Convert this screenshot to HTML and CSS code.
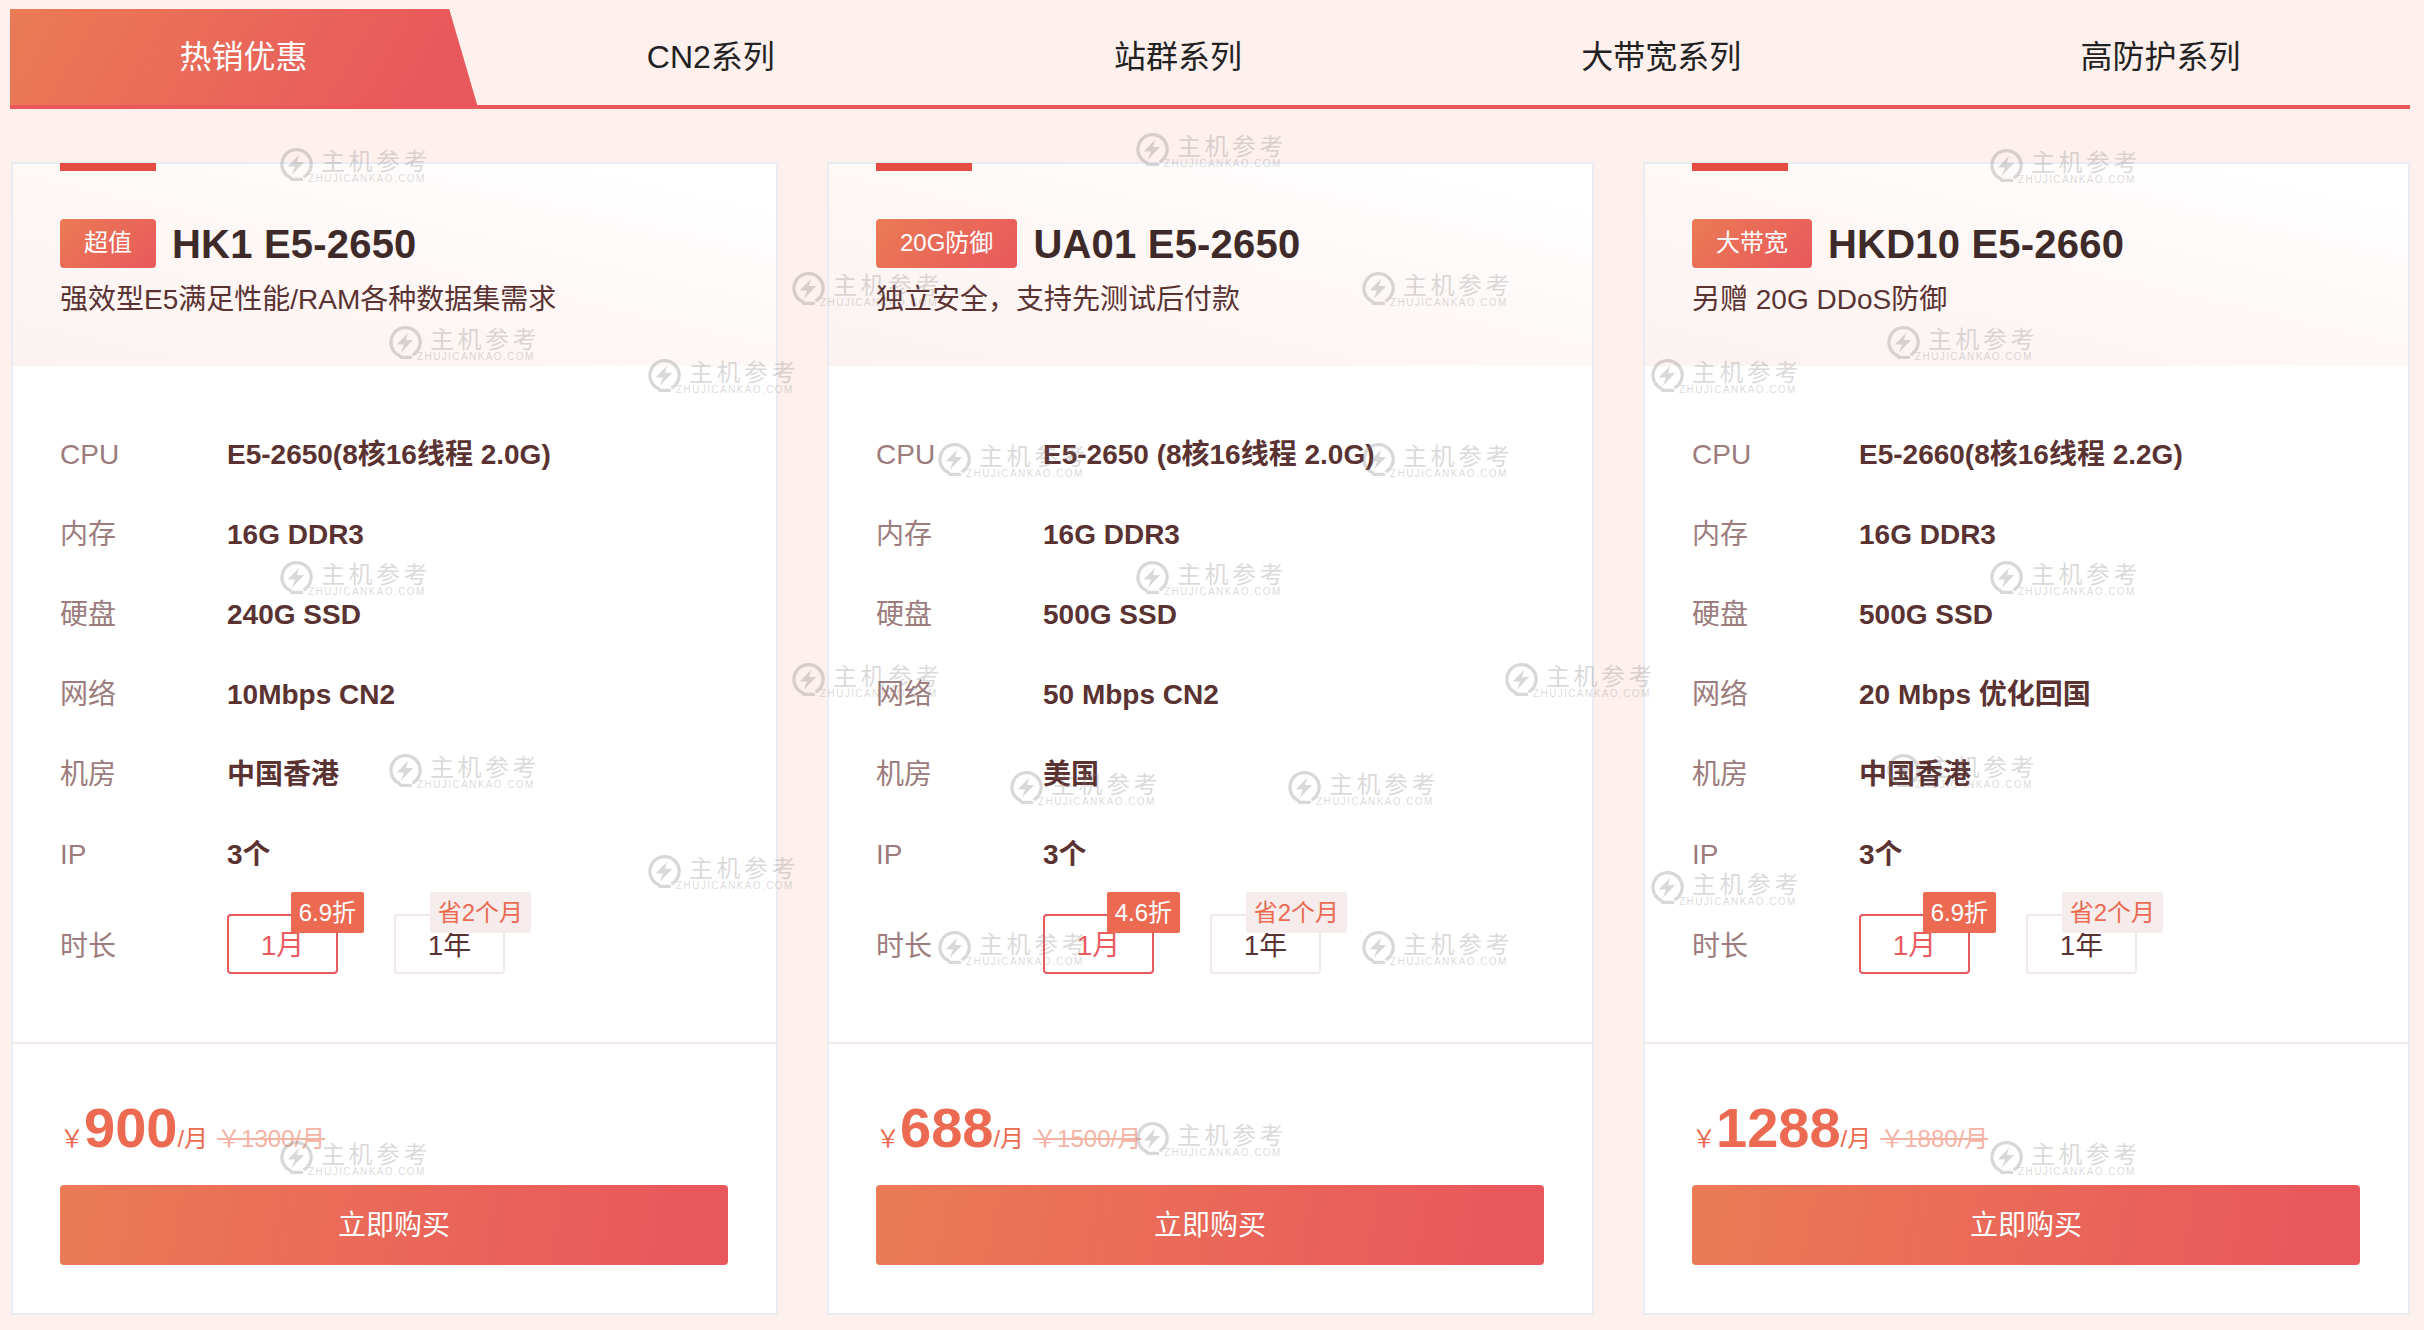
FILE: index.html
```html
<!DOCTYPE html>
<html lang="zh-CN">
<head>
<meta charset="utf-8">
<title>热销优惠</title>
<link rel="stylesheet" href="styles.css">
</head>
<body>
<svg class="defs" width="0" height="0" aria-hidden="true"><defs>
  <g id="wm-logo">
    <path d="M24 28.5A14.2 14.2 0 1 0 10 29.6L11.5 31.5H21" fill="none" stroke="currentColor" stroke-width="3.2" stroke-linecap="round" stroke-linejoin="round"/>
    <path d="M18.5 7.5L7.5 19H14.5L11.5 27L23.5 14.5H16.5Z" fill="currentColor"/>
  </g>
</defs></svg>

<nav class="tabs">
  <a class="tab tab-active">热销优惠</a>
  <a class="tab">CN2系列</a>
  <a class="tab">站群系列</a>
  <a class="tab">大带宽系列</a>
  <a class="tab">高防护系列</a>
</nav>

<main class="cards">
  <section class="card">
    <header class="card-head">
      <div class="title-row"><span class="badge">超值</span><h2 class="title">HK1 E5-2650</h2></div>
      <p class="sub">强效型E5满足性能/RAM各种数据集需求</p>
    </header>
    <div class="specs">
      <div class="row"><span class="label">CPU</span><span class="value">E5-2650(8核16线程 2.0G)</span></div>
      <div class="row"><span class="label">内存</span><span class="value">16G DDR3</span></div>
      <div class="row"><span class="label">硬盘</span><span class="value">240G SSD</span></div>
      <div class="row"><span class="label">网络</span><span class="value">10Mbps CN2</span></div>
      <div class="row"><span class="label">机房</span><span class="value">中国香港</span></div>
      <div class="row"><span class="label">IP</span><span class="value">3个</span></div>
      <div class="row row-term"><span class="label">时长</span>
        <div class="options">
          <div class="option option-on">1月<span class="tag tag-red">6.9折</span></div>
          <div class="option">1年<span class="tag tag-pale">省2个月</span></div>
        </div>
      </div>
    </div>
    <footer class="card-foot">
      <div class="price"><span class="cur">￥</span><span class="amount">900</span><span class="unit">/月</span><span class="old">￥1300/月</span></div>
      <a class="buy">立即购买</a>
    </footer>
  </section>

  <section class="card">
    <header class="card-head">
      <div class="title-row"><span class="badge">20G防御</span><h2 class="title">UA01 E5-2650</h2></div>
      <p class="sub">独立安全，支持先测试后付款</p>
    </header>
    <div class="specs">
      <div class="row"><span class="label">CPU</span><span class="value">E5-2650 (8核16线程 2.0G)</span></div>
      <div class="row"><span class="label">内存</span><span class="value">16G DDR3</span></div>
      <div class="row"><span class="label">硬盘</span><span class="value">500G SSD</span></div>
      <div class="row"><span class="label">网络</span><span class="value">50 Mbps CN2</span></div>
      <div class="row"><span class="label">机房</span><span class="value">美国</span></div>
      <div class="row"><span class="label">IP</span><span class="value">3个</span></div>
      <div class="row row-term"><span class="label">时长</span>
        <div class="options">
          <div class="option option-on">1月<span class="tag tag-red">4.6折</span></div>
          <div class="option">1年<span class="tag tag-pale">省2个月</span></div>
        </div>
      </div>
    </div>
    <footer class="card-foot">
      <div class="price"><span class="cur">￥</span><span class="amount">688</span><span class="unit">/月</span><span class="old">￥1500/月</span></div>
      <a class="buy">立即购买</a>
    </footer>
  </section>

  <section class="card">
    <header class="card-head">
      <div class="title-row"><span class="badge">大带宽</span><h2 class="title">HKD10 E5-2660</h2></div>
      <p class="sub">另赠 20G DDoS防御</p>
    </header>
    <div class="specs">
      <div class="row"><span class="label">CPU</span><span class="value">E5-2660(8核16线程 2.2G)</span></div>
      <div class="row"><span class="label">内存</span><span class="value">16G DDR3</span></div>
      <div class="row"><span class="label">硬盘</span><span class="value">500G SSD</span></div>
      <div class="row"><span class="label">网络</span><span class="value">20 Mbps 优化回国</span></div>
      <div class="row"><span class="label">机房</span><span class="value">中国香港</span></div>
      <div class="row"><span class="label">IP</span><span class="value">3个</span></div>
      <div class="row row-term"><span class="label">时长</span>
        <div class="options">
          <div class="option option-on">1月<span class="tag tag-red">6.9折</span></div>
          <div class="option">1年<span class="tag tag-pale">省2个月</span></div>
        </div>
      </div>
    </div>
    <footer class="card-foot">
      <div class="price"><span class="cur">￥</span><span class="amount">1288</span><span class="unit">/月</span><span class="old">￥1880/月</span></div>
      <a class="buy">立即购买</a>
    </footer>
  </section>
</main>

<div class="wm-layer" aria-hidden="true">
  <div class="wm w1"><svg class="wm-icon" viewBox="0 0 32 34"><use href="#wm-logo"/></svg><div class="wm-zh">主机参考</div><div class="wm-en">ZHUJICANKAO.COM</div></div>
  <div class="wm w2"><svg class="wm-icon" viewBox="0 0 32 34"><use href="#wm-logo"/></svg><div class="wm-zh">主机参考</div><div class="wm-en">ZHUJICANKAO.COM</div></div>
  <div class="wm w3"><svg class="wm-icon" viewBox="0 0 32 34"><use href="#wm-logo"/></svg><div class="wm-zh">主机参考</div><div class="wm-en">ZHUJICANKAO.COM</div></div>
  <div class="wm w4"><svg class="wm-icon" viewBox="0 0 32 34"><use href="#wm-logo"/></svg><div class="wm-zh">主机参考</div><div class="wm-en">ZHUJICANKAO.COM</div></div>
  <div class="wm w5"><svg class="wm-icon" viewBox="0 0 32 34"><use href="#wm-logo"/></svg><div class="wm-zh">主机参考</div><div class="wm-en">ZHUJICANKAO.COM</div></div>
  <div class="wm w6"><svg class="wm-icon" viewBox="0 0 32 34"><use href="#wm-logo"/></svg><div class="wm-zh">主机参考</div><div class="wm-en">ZHUJICANKAO.COM</div></div>
  <div class="wm w7"><svg class="wm-icon" viewBox="0 0 32 34"><use href="#wm-logo"/></svg><div class="wm-zh">主机参考</div><div class="wm-en">ZHUJICANKAO.COM</div></div>
  <div class="wm w8"><svg class="wm-icon" viewBox="0 0 32 34"><use href="#wm-logo"/></svg><div class="wm-zh">主机参考</div><div class="wm-en">ZHUJICANKAO.COM</div></div>
  <div class="wm w9"><svg class="wm-icon" viewBox="0 0 32 34"><use href="#wm-logo"/></svg><div class="wm-zh">主机参考</div><div class="wm-en">ZHUJICANKAO.COM</div></div>
  <div class="wm w10"><svg class="wm-icon" viewBox="0 0 32 34"><use href="#wm-logo"/></svg><div class="wm-zh">主机参考</div><div class="wm-en">ZHUJICANKAO.COM</div></div>
  <div class="wm w11"><svg class="wm-icon" viewBox="0 0 32 34"><use href="#wm-logo"/></svg><div class="wm-zh">主机参考</div><div class="wm-en">ZHUJICANKAO.COM</div></div>
  <div class="wm w12"><svg class="wm-icon" viewBox="0 0 32 34"><use href="#wm-logo"/></svg><div class="wm-zh">主机参考</div><div class="wm-en">ZHUJICANKAO.COM</div></div>
  <div class="wm w13"><svg class="wm-icon" viewBox="0 0 32 34"><use href="#wm-logo"/></svg><div class="wm-zh">主机参考</div><div class="wm-en">ZHUJICANKAO.COM</div></div>
  <div class="wm w14"><svg class="wm-icon" viewBox="0 0 32 34"><use href="#wm-logo"/></svg><div class="wm-zh">主机参考</div><div class="wm-en">ZHUJICANKAO.COM</div></div>
  <div class="wm w15"><svg class="wm-icon" viewBox="0 0 32 34"><use href="#wm-logo"/></svg><div class="wm-zh">主机参考</div><div class="wm-en">ZHUJICANKAO.COM</div></div>
  <div class="wm w16"><svg class="wm-icon" viewBox="0 0 32 34"><use href="#wm-logo"/></svg><div class="wm-zh">主机参考</div><div class="wm-en">ZHUJICANKAO.COM</div></div>
  <div class="wm w17"><svg class="wm-icon" viewBox="0 0 32 34"><use href="#wm-logo"/></svg><div class="wm-zh">主机参考</div><div class="wm-en">ZHUJICANKAO.COM</div></div>
  <div class="wm w18"><svg class="wm-icon" viewBox="0 0 32 34"><use href="#wm-logo"/></svg><div class="wm-zh">主机参考</div><div class="wm-en">ZHUJICANKAO.COM</div></div>
  <div class="wm w19"><svg class="wm-icon" viewBox="0 0 32 34"><use href="#wm-logo"/></svg><div class="wm-zh">主机参考</div><div class="wm-en">ZHUJICANKAO.COM</div></div>
  <div class="wm w20"><svg class="wm-icon" viewBox="0 0 32 34"><use href="#wm-logo"/></svg><div class="wm-zh">主机参考</div><div class="wm-en">ZHUJICANKAO.COM</div></div>
  <div class="wm w21"><svg class="wm-icon" viewBox="0 0 32 34"><use href="#wm-logo"/></svg><div class="wm-zh">主机参考</div><div class="wm-en">ZHUJICANKAO.COM</div></div>
  <div class="wm w22"><svg class="wm-icon" viewBox="0 0 32 34"><use href="#wm-logo"/></svg><div class="wm-zh">主机参考</div><div class="wm-en">ZHUJICANKAO.COM</div></div>
  <div class="wm w23"><svg class="wm-icon" viewBox="0 0 32 34"><use href="#wm-logo"/></svg><div class="wm-zh">主机参考</div><div class="wm-en">ZHUJICANKAO.COM</div></div>
  <div class="wm w24"><svg class="wm-icon" viewBox="0 0 32 34"><use href="#wm-logo"/></svg><div class="wm-zh">主机参考</div><div class="wm-en">ZHUJICANKAO.COM</div></div>
  <div class="wm w25"><svg class="wm-icon" viewBox="0 0 32 34"><use href="#wm-logo"/></svg><div class="wm-zh">主机参考</div><div class="wm-en">ZHUJICANKAO.COM</div></div>
  <div class="wm w26"><svg class="wm-icon" viewBox="0 0 32 34"><use href="#wm-logo"/></svg><div class="wm-zh">主机参考</div><div class="wm-en">ZHUJICANKAO.COM</div></div>
  <div class="wm w27"><svg class="wm-icon" viewBox="0 0 32 34"><use href="#wm-logo"/></svg><div class="wm-zh">主机参考</div><div class="wm-en">ZHUJICANKAO.COM</div></div>
</div>
</body>
</html>
```

FILE: styles.css
```css
* { box-sizing: border-box; }
html, body { margin: 0; padding: 0; }
body {
  position: relative;
  height: 1330px;
  overflow: hidden;
  padding: 9px 14px 15px 10px;
  background: #fdf0ed;
  font-family: "Liberation Sans", "Noto Sans CJK SC", sans-serif;
  font-size: 28px;
  color: #5a3232;
}
.defs { position: absolute; }

/* tabs */
.tabs {
  display: flex;
  border-bottom: 4px solid #ea585c;
  height: 100px;
}
.tab {
  flex: 1 1 auto;
  padding: 0 168px;
  height: 96px;
  line-height: 96px;
  text-align: center;
  font-size: 32px;
  color: #222;
  white-space: nowrap;
}
.tab-active {
  color: #fff;
  background: linear-gradient(120deg, #ea7b55 0%, #e9585c 88%);
  clip-path: polygon(0 0, calc(100% - 28px) 0, 100% 100%, 0 100%);
}

/* cards */
.cards {
  display: grid;
  grid-template-columns: repeat(3, 767px);
  column-gap: 49px;
  margin: 53px 0 0 1px;
}
.card {
  position: relative;
  height: 1153px;
  background: #fff;
  border: 2px solid #e9edf2;
}
.card-head {
  position: relative;
  height: 202px;
  padding: 55px 47px 0;
  background: linear-gradient(193deg, #fff 12%, #fefbfa 32%, #fdf6f4 62%, #fbf3f1 100%);
}
.card-head::before {
  content: "";
  position: absolute;
  left: 47px;
  top: -1px;
  width: 96px;
  height: 8px;
  background: #e34e41;
}
.title-row { display: flex; align-items: center; gap: 16px; height: 49px; }
.badge {
  height: 49px;
  padding: 0 24px;
  line-height: 48px;
  font-size: 24px;
  color: #fff;
  border-radius: 4px;
  background: linear-gradient(135deg, #ea7b55, #e9585c);
}
.title { margin: 2px 0 0; font-size: 40px; letter-spacing: 0.2px; font-weight: 700; color: #3f2a2a; white-space: nowrap; }
.sub { margin: 12px 0 0; font-size: 28px; line-height: 40px; color: #5a3232; white-space: nowrap; }

/* specs */
.specs { padding: 47px 47px 68px; }
.row { display: flex; align-items: center; height: 80px; line-height: 40px; }
.label { flex: 0 0 167px; margin-top: 3px; color: #9c7c7c; }
.value { margin-top: 3px; font-weight: 700; color: #5a3232; white-space: nowrap; }
.row-term { height: 60px; margin-top: 21px; }
.row-term .label { margin-top: 6px; }
.options { display: flex; gap: 56px; }
.option {
  position: relative;
  width: 111px;
  height: 60px;
  line-height: 60px;
  text-align: center;
  border: 2px solid #f3e8e8;
  border-radius: 4px;
  color: #5a3232;
}
.option-on { border-color: #e95a5c; color: #e95a5c; }
.tag {
  position: absolute;
  top: -24px;
  right: -28px;
  height: 41px;
  padding: 0 8px;
  line-height: 41px;
  font-size: 24px;
  border-radius: 2px;
  white-space: nowrap;
}
.tag-red { background: #ec6a52; color: #fff; }
.tag-pale { background: #f5eceb; color: #ec6a52; }

/* footer */
.card-foot { border-top: 2px solid #f3e8e8; padding: 60px 48px 48px 47px; }
.price {
  display: flex;
  align-items: baseline;
  height: 81px;
  line-height: 48px;
  color: #ec6a52;
  white-space: nowrap;
}
.cur { font-size: 24px; }
.amount { font-size: 56px; font-weight: 700; }
.unit { font-size: 24px; }
.old { font-size: 24px; margin-left: 9px; color: #f5b3a5; text-decoration: line-through; }
.buy {
  display: block;
  height: 80px;
  line-height: 82px;
  text-align: center;
  color: #fff;
  font-size: 28px;
  border-radius: 4px;
  background: linear-gradient(100deg, #ea7b55 0%, #e9585c 92%);
}

/* watermarks scattered across the page */
.wm-layer { position: absolute; inset: 0; pointer-events: none; }
.wm {
  position: absolute;
  width: 150px;
  height: 34px;
  color: rgba(130, 125, 125, 0.3);
}
.wm-icon { position: absolute; left: -1px; top: -2px; width: 33px; height: 35px; }
.wm-zh {
  position: absolute;
  left: 40px;
  top: 0;
  font-size: 24px;
  line-height: 26px;
  letter-spacing: 3.5px;
  white-space: nowrap;
}
.wm-en {
  position: absolute;
  left: 27px;
  top: 24px;
  font-size: 10px;
  line-height: 11px;
  letter-spacing: 1.4px;
  white-space: nowrap;
}
.w1 { left: 281px; top: 149px; }
.w2 { left: 1137px; top: 134px; }
.w3 { left: 1991px; top: 150px; }
.w4 { left: 793px; top: 273px; }
.w5 { left: 1363px; top: 273px; }
.w6 { left: 390px; top: 327px; }
.w7 { left: 1888px; top: 327px; }
.w8 { left: 649px; top: 360px; }
.w9 { left: 1652px; top: 360px; }
.w10 { left: 939px; top: 444px; }
.w11 { left: 1363px; top: 444px; }
.w12 { left: 281px; top: 562px; }
.w13 { left: 1137px; top: 562px; }
.w14 { left: 1991px; top: 562px; }
.w15 { left: 793px; top: 664px; }
.w16 { left: 1506px; top: 664px; }
.w17 { left: 390px; top: 755px; }
.w18 { left: 1888px; top: 755px; }
.w19 { left: 1011px; top: 772px; }
.w20 { left: 1289px; top: 772px; }
.w21 { left: 649px; top: 856px; }
.w22 { left: 1652px; top: 872px; }
.w23 { left: 939px; top: 932px; }
.w24 { left: 1363px; top: 932px; }
.w25 { left: 281px; top: 1142px; }
.w26 { left: 1137px; top: 1123px; }
.w27 { left: 1991px; top: 1142px; }
```
